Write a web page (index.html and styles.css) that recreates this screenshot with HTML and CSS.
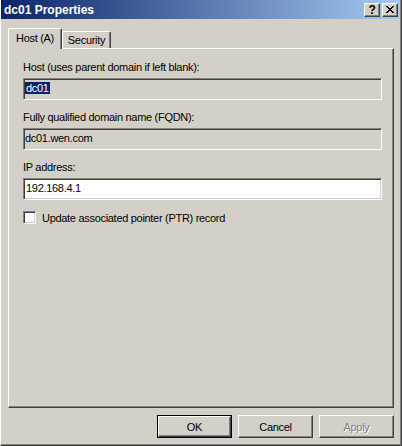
FILE: index.html
```html
<!DOCTYPE html>
<html lang="en">
<head>
    <meta charset="UTF-8">
    <title>dc01 Properties</title>
    <link rel="stylesheet" href="styles.css">
</head>
<body>

<div class="window">
    <div class="titlebar">
        <span class="title">dc01 Properties</span>
        <div class="title-buttons">
            <span class="cap-btn">?</span>
            <span class="cap-btn">
                <svg width="8" height="7" viewBox="0 0 8 7">
                    <path d="M0 0h2v1h-2zM6 0h2v1h-2zM1 1h2v1h-2zM5 1h2v1h-2zM2 2h4v1h-4zM3 3h2v1h-2zM2 4h4v1h-4zM1 5h2v1h-2zM5 5h2v1h-2zM0 6h2v1h-2zM6 6h2v1h-2z" fill="#000"/>
                </svg>
            </span>
        </div>
    </div>

    <div class="content">
        <div class="tabs">
            <div class="tab active">Host (A)</div>
            <div class="tab">Security</div>
        </div>

        <div class="panel">
            <div class="group">
                <div class="label">Host (uses parent domain if left blank):</div>
                <div class="textbox readonly"><span class="selected">dc01</span></div>
            </div>
            <div class="group">
                <div class="label">Fully qualified domain name (FQDN):</div>
                <div class="textbox readonly">dc01.wen.com</div>
            </div>
            <div class="group">
                <div class="label">IP address:</div>
                <div class="textbox">192.168.4.1</div>
            </div>
            <div class="check-row">
                <span class="checkbox"></span>
                <span>Update associated pointer (PTR) record</span>
            </div>
        </div>

        <div class="buttons">
            <div class="button default"><span>OK</span></div>
            <div class="button">Cancel</div>
            <div class="button disabled">Apply</div>
        </div>
    </div>
</div>

</body>
</html>
```

FILE: styles.css
```css
body {
    margin: 0;
    font-family: "Liberation Sans", Arial, sans-serif;
    font-size: 11px;
    letter-spacing: -0.3px;
    color: #000;
    background-color: #d4d0c8;
}
.window {
    width: 402px;
    height: 446px;
    box-sizing: border-box;
    background-color: #d4d0c8;
    border-left: 1px solid #fff;
    border-right: 1px solid #404040;
    border-bottom: 1px solid #404040;
    box-shadow: inset -1px -1px #808080;
}
.titlebar {
    height: 19px;
    margin-right: 1px;
    display: flex;
    align-items: center;
    justify-content: space-between;
    background: linear-gradient(to right, #0a246a, #a6caf0);
}
.title {
    color: #fff;
    font-weight: bold;
    font-size: 12px;
    letter-spacing: 0;
    padding-left: 3px;
}
.title-buttons {
    display: flex;
    gap: 2px;
    padding-right: 2px;
}
.cap-btn {
    width: 16px;
    height: 14px;
    box-sizing: border-box;
    display: flex;
    align-items: center;
    justify-content: center;
    background-color: #d4d0c8;
    border-top: 1px solid #fff;
    border-left: 1px solid #fff;
    border-right: 1px solid #404040;
    border-bottom: 1px solid #404040;
    box-shadow: inset -1px -1px #808080;
    font-weight: bold;
    font-size: 12px;
    line-height: 12px;
}
.content {
    padding: 0 7px;
}
.tabs {
    display: flex;
    align-items: flex-end;
    height: 21px;
    margin-top: 8px;
}
.tab {
    width: 49px;
    height: 17px;
    box-sizing: border-box;
    padding-top: 2px;
    text-align: center;
    border-top: 1px solid #fff;
    border-left: 1px solid #fff;
    border-right: 1px solid #404040;
    box-shadow: inset -1px 0 #808080;
    border-radius: 2px 2px 0 0;
    background-color: #d4d0c8;
}
.tab.active {
    width: 54px;
    height: 21px;
    padding-top: 3px;
    margin-bottom: -1px;
    position: relative;
    z-index: 1;
}
.panel {
    height: 360px;
    box-sizing: border-box;
    padding: 12px 11px 0 14px;
    border-top: 1px solid #fff;
    border-left: 1px solid #fff;
    border-right: 1px solid #404040;
    border-bottom: 1px solid #404040;
    box-shadow: inset -1px -1px #808080;
}
.group {
    margin-bottom: 11px;
}
.label {
    height: 13px;
    line-height: 13px;
    margin-bottom: 4px;
}
.textbox {
    height: 22px;
    box-sizing: border-box;
    padding: 3px 2px 0 2px;
    line-height: 13px;
    background-color: #fff;
    border: 1px solid;
    border-color: #808080 #fff #fff #808080;
    box-shadow: inset 1px 1px #404040, inset -1px -1px #d4d0c8;
}
.textbox.readonly {
    background-color: #d4d0c8;
    padding-left: 1px;
}
.selected {
    background-color: #0a246a;
    color: #fff;
    padding: 0 1px;
}
.check-row {
    display: flex;
    align-items: center;
    gap: 6px;
    margin-top: 2px;
}
.checkbox {
    width: 13px;
    height: 13px;
    box-sizing: border-box;
    background-color: #fff;
    border: 1px solid;
    border-color: #808080 #fff #fff #808080;
    box-shadow: inset 1px 1px #404040, inset -1px -1px #d4d0c8;
}
.buttons {
    display: flex;
    justify-content: flex-end;
    gap: 6px;
    margin-top: 7px;
}
.button {
    width: 75px;
    height: 23px;
    box-sizing: border-box;
    display: flex;
    align-items: center;
    justify-content: center;
    border-top: 1px solid #fff;
    border-left: 1px solid #fff;
    border-right: 1px solid #404040;
    border-bottom: 1px solid #404040;
    box-shadow: inset -1px -1px #808080;
}
.button.default {
    border: 1px solid #000;
    box-shadow: none;
    padding: 0;
}
.button.default span {
    width: 100%;
    height: 100%;
    box-sizing: border-box;
    display: flex;
    align-items: center;
    justify-content: center;
    border-top: 1px solid #fff;
    border-left: 1px solid #fff;
    border-right: 1px solid #404040;
    border-bottom: 1px solid #404040;
    box-shadow: inset -1px -1px #808080;
}
.button.disabled {
    color: #808080;
    text-shadow: 1px 1px #fff;
}
```
